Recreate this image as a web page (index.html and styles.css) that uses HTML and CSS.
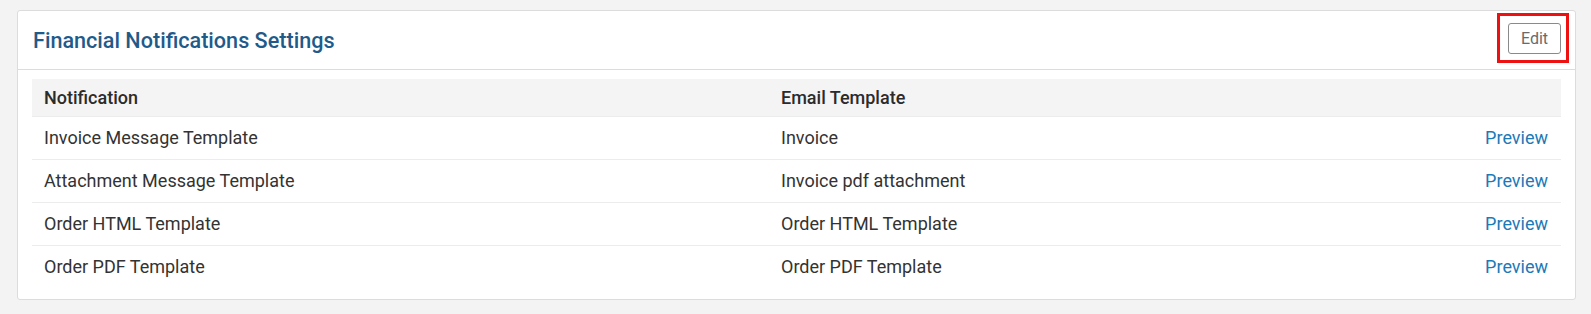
FILE: index.html
```html
<!DOCTYPE html>
<html>
<head>
<meta charset="utf-8">
<link rel="stylesheet" href="styles.css">
</head>
<body>
<div class="card">
  <div class="card-header">
    <h2 class="title">Financial Notifications Settings</h2>
    <button class="edit-btn">Edit</button>
  </div>
  <div class="card-body">
    <div class="grid">
      <div class="row head">
        <div class="cell">Notification</div>
        <div class="cell">Email Template</div>
        <div class="cell"></div>
      </div>
      <div class="row">
        <div class="cell">Invoice Message Template</div>
        <div class="cell">Invoice</div>
        <div class="cell link">Preview</div>
      </div>
      <div class="row">
        <div class="cell">Attachment Message Template</div>
        <div class="cell">Invoice pdf attachment</div>
        <div class="cell link">Preview</div>
      </div>
      <div class="row">
        <div class="cell">Order HTML Template</div>
        <div class="cell">Order HTML Template</div>
        <div class="cell link">Preview</div>
      </div>
      <div class="row">
        <div class="cell">Order PDF Template</div>
        <div class="cell">Order PDF Template</div>
        <div class="cell link">Preview</div>
      </div>
    </div>
  </div>
</div>
</body>
</html>
```
FILE: styles.css
```css
html, body {
  margin: 0;
  background: #f3f3f3;
}
body {
  padding: 10px 15px 10px 17px;
  font-family: Roboto, "Liberation Sans", Arial, sans-serif;
  color: #333;
}
.card {
  background: #fff;
  border: 1px solid #dcdcdc;
  border-radius: 3px;
}
.card-header {
  display: flex;
  align-items: center;
  justify-content: space-between;
  height: 58px;
  padding: 0 14px 0 15px;
  border-bottom: 1px solid #dcdcdc;
}
.title {
  margin: 0;
  font-size: 21.6px;
  font-weight: 500;
  color: #1f5b8a;
}
.edit-btn {
  position: relative;
  margin-bottom: 4px;
  width: 53px;
  height: 31px;
  padding: 0;
  background: #fff;
  border: 1px solid #8a8a8a;
  border-radius: 3px;
  color: #6a6a6a;
  font-family: Roboto, "Liberation Sans", Arial, sans-serif;
  font-size: 16px;
}
.edit-btn::after {
  content: "";
  position: absolute;
  left: -12px;
  top: -11px;
  right: -9px;
  bottom: -10px;
  border: 3px solid #ee1111;
}
.card-body {
  padding: 9px 14px 11px;
}
.row {
  display: grid;
  grid-template-columns: 737px 1fr auto;
  align-items: center;
  height: 42px;
  border-top: 1px solid #ececec;
  font-size: 18px;
}
.row .cell {
  padding-bottom: 2px;
}
.row.head {
  height: 37px;
  border-top: none;
  background: #f4f4f4;
  font-weight: 500;
  color: #2b2b2b;
}
.row.head .cell {
  padding-bottom: 0;
}
.cell {
  padding: 0 13px 0 12px;
}
.link {
  color: #1b7ab8;
}
```
